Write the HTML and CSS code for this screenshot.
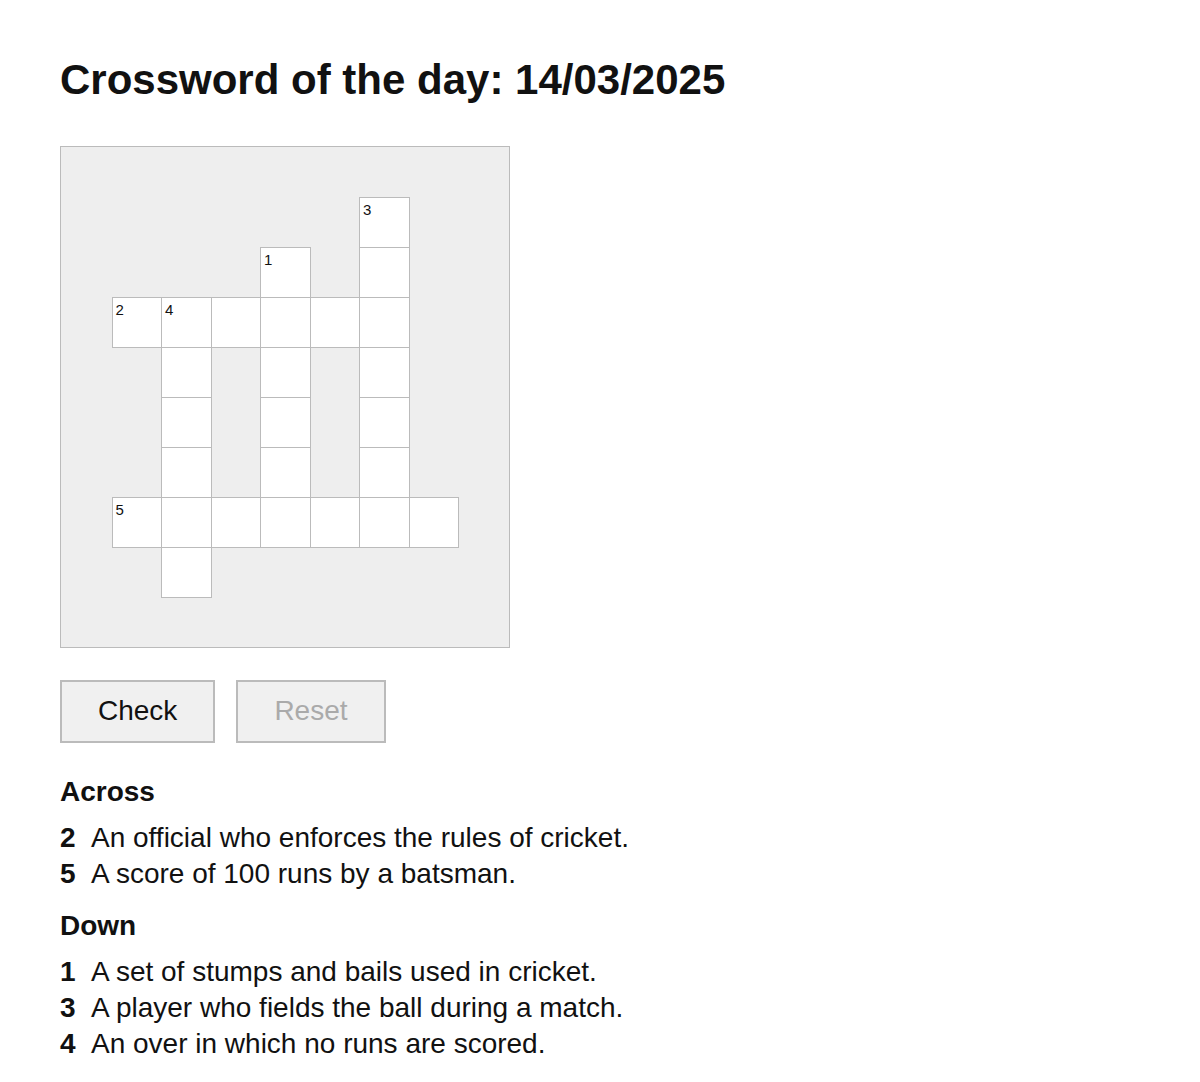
FILE: index.html
```html
<!DOCTYPE html>
<html lang="en">
  <head>
    <meta charset="UTF-8" />
    <meta name="viewport" content="width=device-width, initial-scale=1.0" />
    <title>Crossword of the day</title>
    <link rel="stylesheet" href="styles.css">
  </head>
  <body>
    <div class="page">
      <h1 class="title">Crossword of the day: 14/03/2025</h1>

      <!-- Puzzle grid (filled by script) -->
      <div class="board" id="board"></div>

      <div class="actions">
        <button class="btn" onclick="checkAnswers()">Check</button>
        <button class="btn" id="resetBtn" disabled onclick="resetBoard()">Reset</button>
      </div>

      <!-- Clues -->
      <div class="clues">
        <h3>Across</h3>
        <ol class="clue-list">
          <li><span class="num">2</span>An official who enforces the rules of cricket.</li>
          <li><span class="num">5</span>A score of 100 runs by a batsman.</li>
        </ol>
        <h3>Down</h3>
        <ol class="clue-list">
          <li><span class="num">1</span>A set of stumps and bails used in cricket.</li>
          <li><span class="num">3</span>A player who fields the ball during a match.</li>
          <li><span class="num">4</span>An over in which no runs are scored.</li>
        </ol>
      </div>
    </div>

    <script>
      const ROWS = 10;
      const COLS = 9;

      // word list: row, col, direction, answer, clue number
      const words = [
        { num: 1, row: 2, col: 4, dir: "down", answer: "WICKET" },
        { num: 2, row: 3, col: 1, dir: "across", answer: "UMPIRE" },
        { num: 3, row: 1, col: 6, dir: "down", answer: "FIELDER" },
        { num: 4, row: 3, col: 2, dir: "down", answer: "MAIDEN" },
        { num: 5, row: 7, col: 1, dir: "across", answer: "CENTURY" },
      ];

      const cells = {};

      words.forEach((w) => {
        for (let i = 0; i < w.answer.length; i++) {
          const r = w.dir === "down" ? w.row + i : w.row;
          const c = w.dir === "across" ? w.col + i : w.col;
          const key = r + "-" + c;
          if (!cells[key]) cells[key] = { letter: w.answer[i] };
          if (i === 0) cells[key].num = w.num;
        }
      });

      const board = document.getElementById("board");

      for (let r = 0; r < ROWS; r++) {
        for (let c = 0; c < COLS; c++) {
          const slot = document.createElement("div");
          slot.className = "slot";
          const cell = cells[r + "-" + c];
          if (cell) {
            const box = document.createElement("div");
            box.className = "cell";
            if (cell.num) {
              const n = document.createElement("span");
              n.className = "cell-num";
              n.textContent = cell.num;
              box.appendChild(n);
            }
            const input = document.createElement("input");
            input.maxLength = 1;
            input.dataset.answer = cell.letter;
            input.addEventListener("input", () => {
              document.getElementById("resetBtn").disabled = false;
            });
            box.appendChild(input);
            slot.appendChild(box);
          }
          board.appendChild(slot);
        }
      }

      function checkAnswers() {
        document.querySelectorAll(".cell input").forEach((input) => {
          const ok = input.value.toUpperCase() === input.dataset.answer;
          input.parentNode.classList.toggle("wrong", input.value !== "" && !ok);
        });
      }

      function resetBoard() {
        document.querySelectorAll(".cell input").forEach((input) => {
          input.value = "";
          input.parentNode.classList.remove("wrong");
        });
        document.getElementById("resetBtn").disabled = true;
      }
    </script>
  </body>
</html>
```

FILE: styles.css
```css
body {
  font-family: "Liberation Sans", Arial, sans-serif;
  color: #111;
  margin: 0;
}
.page {
  padding: 56px 60px 20px;
}
.title {
  font-size: 42px;
  line-height: 48px;
  font-weight: bold;
  margin: 0 0 42px;
}
.board {
  display: grid;
  grid-template-columns: repeat(9, 49.5px);
  grid-template-rows: repeat(10, 50px);
  width: max-content;
  padding: 0 1px;
  background-color: #eee;
  border: 1px solid #bbb;
}
.slot {
  position: relative;
}
.cell {
  position: relative;
  box-sizing: border-box;
  width: calc(100% + 1px);
  height: calc(100% + 1px);
  background-color: #fff;
  border: 1px solid #bbb;
}
.cell.wrong {
  background-color: #fde2e2;
}
.cell-num {
  position: absolute;
  top: 4px;
  left: 3px;
  font-size: 15px;
  line-height: 1;
}
.cell input {
  box-sizing: border-box;
  width: 100%;
  height: 100%;
  border: none;
  background: transparent;
  text-align: center;
  font-family: inherit;
  font-size: 26px;
  text-transform: uppercase;
  outline: none;
}
.actions {
  display: flex;
  gap: 21px;
  margin-top: 32px;
}
.btn {
  font-family: inherit;
  font-size: 28px;
  line-height: 32px;
  color: #111;
  background-color: #f0f0f0;
  border: 2px solid #bbb;
  padding: 13px 36px 14px;
  cursor: pointer;
}
.btn:disabled {
  color: #aaa;
  cursor: default;
}
.clues {
  margin-top: 33px;
}
.clues h3 {
  font-size: 28px;
  line-height: 32px;
  font-weight: bold;
  margin: 0 0 12px;
}
.clue-list {
  list-style: none;
  padding: 0;
  margin: 0 0 18px;
}
.clue-list li {
  font-size: 28px;
  line-height: 36px;
}
.num {
  display: inline-block;
  width: 31px;
  font-weight: bold;
}
```
